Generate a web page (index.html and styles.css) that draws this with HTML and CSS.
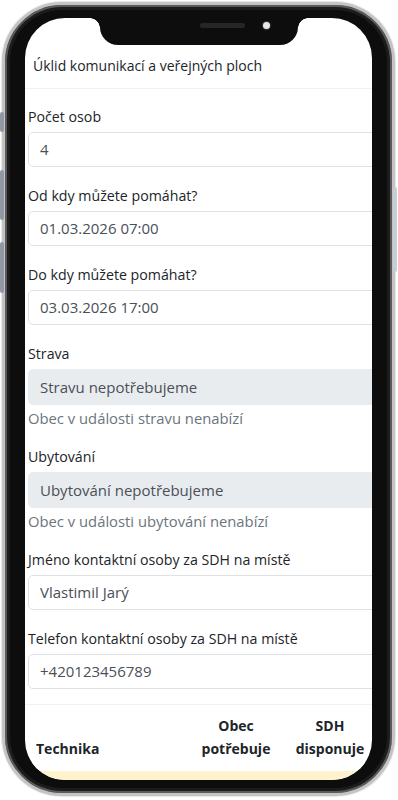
FILE: index.html
```html
<!DOCTYPE html>
<html lang="cs">
<head>
<meta charset="utf-8">
<title>Nabídka pomoci</title>
<link rel="stylesheet" href="styles.css">
</head>
<body>
<div class="device">
  <span class="btn btn-mute"></span>
  <span class="btn btn-vol-up"></span>
  <span class="btn btn-vol-down"></span>
  <span class="btn btn-power"></span>
  <div class="phone">
    <div class="screen">
      <div class="content">
        <div class="item">Úklid komunikací a veřejných ploch</div>

        <div class="field">
          <label class="label">Počet osob</label>
          <div class="input">4</div>
        </div>
        <div class="field">
          <label class="label">Od kdy můžete pomáhat?</label>
          <div class="input">01.03.2026 07:00</div>
        </div>
        <div class="field">
          <label class="label">Do kdy můžete pomáhat?</label>
          <div class="input">03.03.2026 17:00</div>
        </div>
        <div class="field">
          <label class="label">Strava</label>
          <div class="input select">Stravu nepotřebujeme</div>
          <div class="help">Obec v události stravu nenabízí</div>
        </div>
        <div class="field">
          <label class="label">Ubytování</label>
          <div class="input select">Ubytování nepotřebujeme</div>
          <div class="help">Obec v události ubytování nenabízí</div>
        </div>
        <div class="field">
          <label class="label">Jméno kontaktní osoby za SDH na místě</label>
          <div class="input">Vlastimil Jarý</div>
        </div>
        <div class="field last">
          <label class="label">Telefon kontaktní osoby za SDH na místě</label>
          <div class="input">+420123456789</div>
        </div>

        <table class="table">
          <thead>
            <tr>
              <th class="c-name">Technika</th>
              <th class="c-need">Obec<br>potřebuje</th>
              <th class="c-have">SDH<br>disponuje</th>
            </tr>
          </thead>
          <tbody>
            <tr class="warn">
              <td></td>
              <td></td>
              <td></td>
            </tr>
          </tbody>
        </table>
      </div>
      <div class="notch">
        <span class="speaker"></span>
        <span class="camera"></span>
      </div>
    </div>
  </div>
</div>
</body>
</html>
```
FILE: styles.css
```css
* { box-sizing: border-box; }

html, body {
  margin: 0;
  padding: 0;
  background: #ffffff;
}

body {
  font-family: "Open Sans", "Noto Sans", "DejaVu Sans", sans-serif;
  color: #212529;
  width: 398px;
  height: 800px;
  overflow: hidden;
}

.device {
  position: relative;
  width: 398px;
  height: 800px;
  padding: 2px 3px 4px 2px;
}

.phone {
  width: 393px;
  height: 794px;
  border-radius: 60px;
  background: #0d0d0d;
  border: 3px solid #c4c4c4;
  box-shadow: inset 0 0 0 2px #5a5a5a, inset 0 0 0 5px #1c1c1c, 0 0 1px 1px #e6e6e6;
  padding: 13px 20px 13px 20px;
}

.btn {
  position: absolute;
  background: #8f98a3;
  border-radius: 2px;
  width: 4px;
}
.btn-mute { left: 0; top: 112px; height: 20px; }
.btn-vol-up { left: 0; top: 170px; height: 50px; }
.btn-vol-down { left: 0; top: 242px; height: 51px; }
.btn-power { right: 1px; top: 187px; height: 85px; background: #c8cdd3; }

.screen {
  position: relative;
  width: 347px;
  height: 762px;
  border-radius: 40px;
  background: #ffffff;
  overflow: hidden;
}

.notch {
  position: absolute;
  left: 75px;
  top: 0;
  width: 198px;
  height: 27px;
  background: #0d0d0d;
  border-radius: 0 0 18px 18px;
}
.notch::before,
.notch::after {
  content: "";
  position: absolute;
  top: 0;
  width: 10px;
  height: 10px;
}
.notch::before {
  left: -10px;
  background: radial-gradient(circle at 0 100%, transparent 9.5px, #0d0d0d 10px);
}
.notch::after {
  right: -10px;
  background: radial-gradient(circle at 100% 100%, transparent 9.5px, #0d0d0d 10px);
}
.speaker {
  position: absolute;
  left: 100px;
  top: 5px;
  width: 45px;
  height: 5px;
  border-radius: 3px;
  background: #262626;
}
.camera {
  position: absolute;
  left: 163px;
  top: 4px;
  width: 7px;
  height: 7px;
  border-radius: 50%;
  background: #e8e8e8;
  box-shadow: 0 0 0 1px #333;
}

.content {
  width: 370px;
  padding-left: 3px;
  font-size: 14px;
}

.item {
  margin: 26px 0 0 -3px;
  padding: 11px 8px 11px 8px;
  line-height: 22px;
  color: #212529;
  border-bottom: 1px solid #f1f1f1;
}

.field {
  margin-top: 17px;
}
.field + .field {
  margin-top: 18px;
}

.label {
  display: block;
  line-height: 22px;
  margin-bottom: 4px;
  font-size: 14.2px;
  color: #212529;
}

.input {
  height: 35px;
  line-height: 33px;
  padding: 0 11px;
  border: 1px solid #dee2e6;
  border-radius: 5px;
  color: #495057;
  background: #ffffff;
  font-size: 15px;
}

.select {
  height: 36px;
  line-height: 35px;
  background: #e9ecef;
  border-color: #e9ecef;
}

.help {
  margin-top: 3px;
  line-height: 20px;
  color: #6c757d;
  font-size: 14.8px;
}

.table {
  margin: 15px 0 0 -3px;
  width: 352px;
  table-layout: fixed;
  border-collapse: collapse;
  border-top: 1px solid #f1f1f1;
  font-size: 14px;
}
.table th {
  font-weight: 700;
  line-height: 23px;
  padding: 9px 4px 2px;
  vertical-align: bottom;
  border-bottom: 1px solid #f1f1f1;
  color: #212529;
}
.c-name { width: 164px; text-align: left; padding-left: 11px !important; }
.c-need { width: 94px; text-align: center; }
.c-have { width: 94px; text-align: center; }

.warn td {
  background: #fff3cd;
  border-top: 9px solid #ffffff;
  padding: 0;
  height: 49px;
}
```
